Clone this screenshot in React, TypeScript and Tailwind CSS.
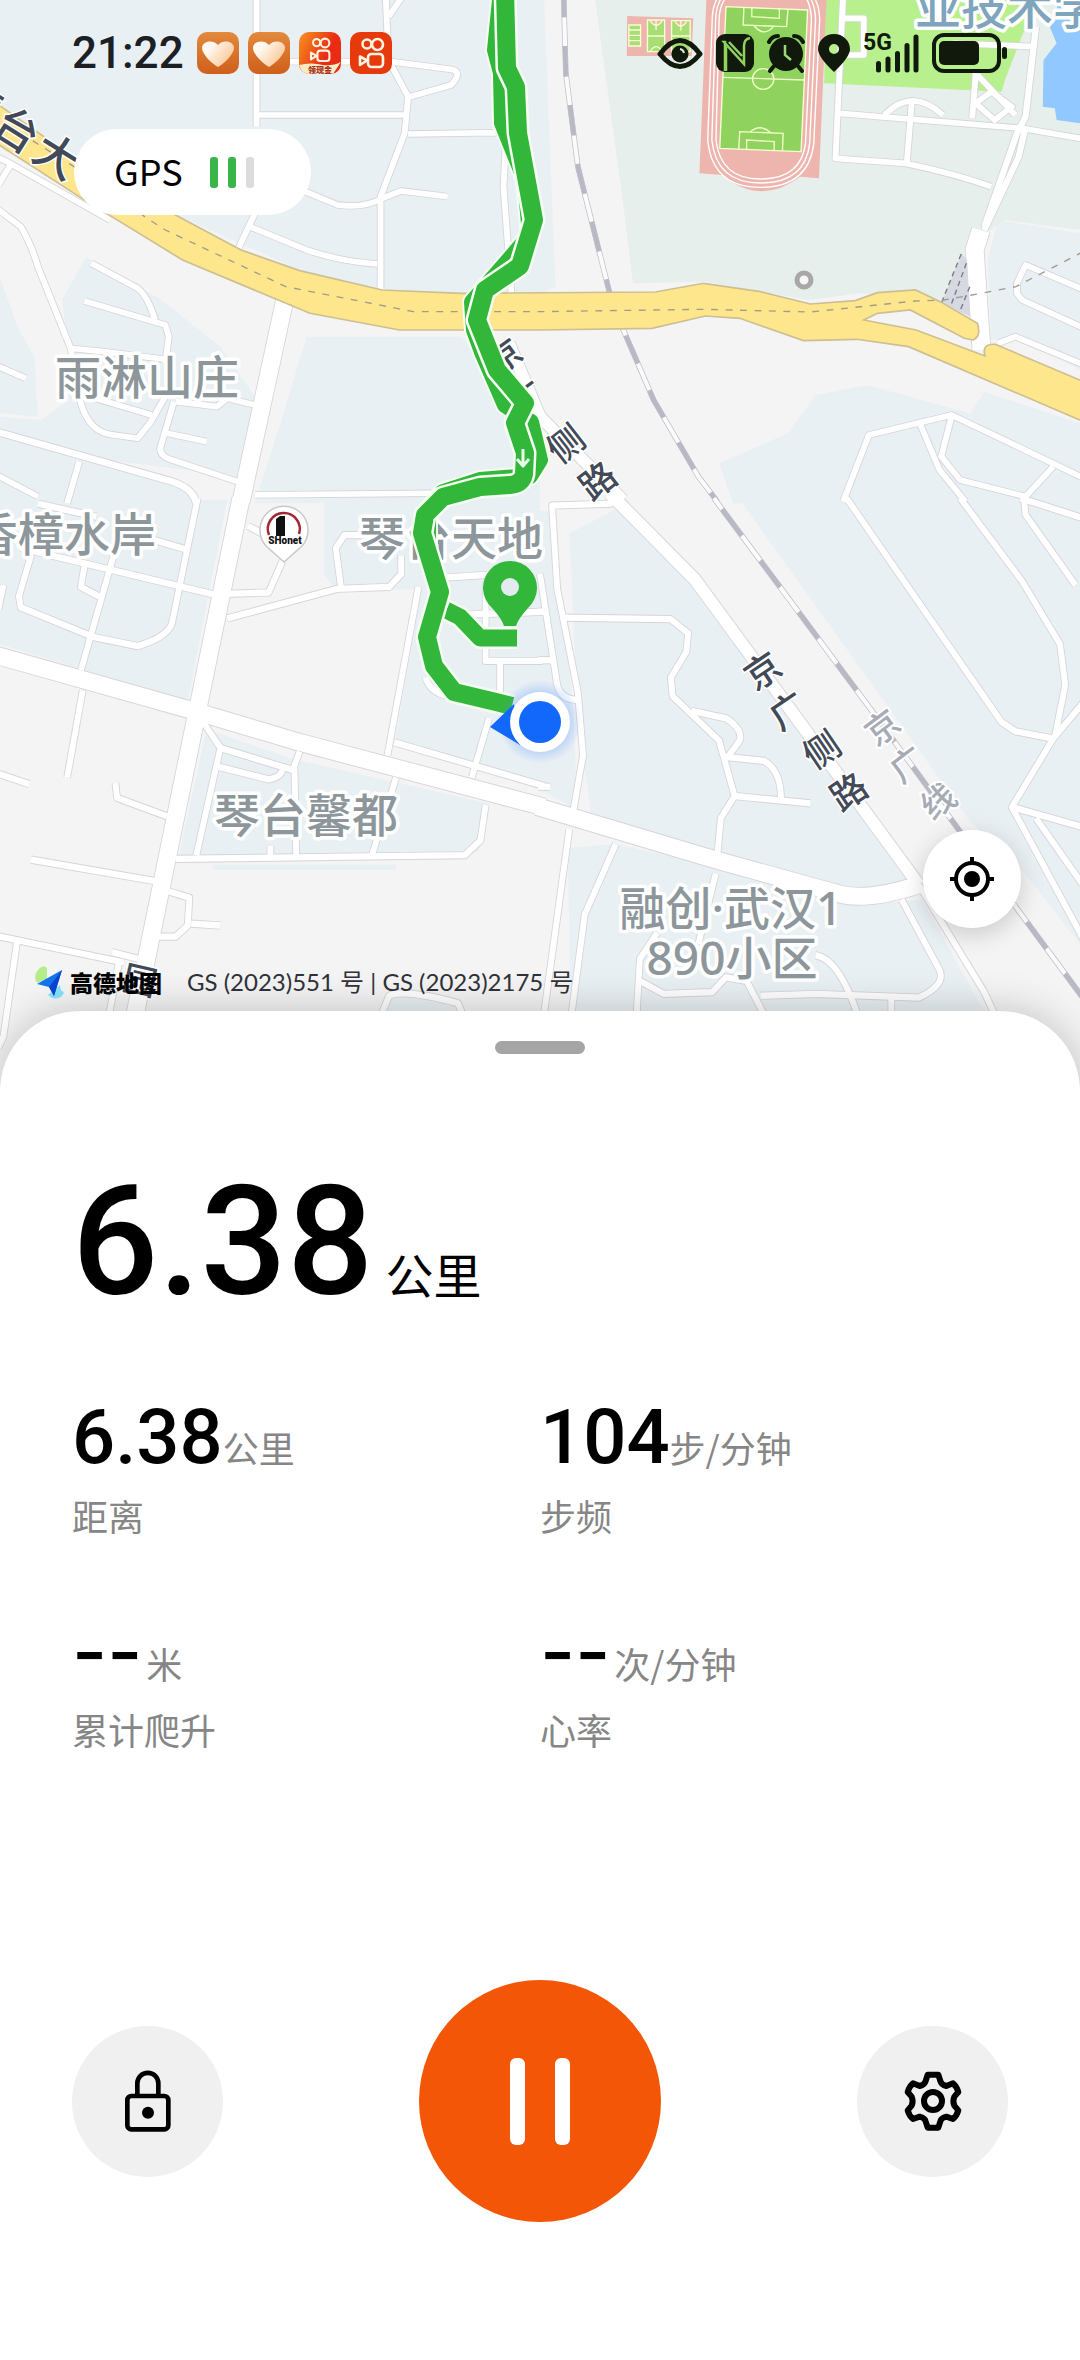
import React from "react";

type Road = { d: string; w?: number };
type Tile = { id: string; transform: string; blocks: string[]; roads: Road[] };

const tiles: Tile[] = [
  {
    id: "nw",
    transform: "scale(.3444 .3333)",
    blocks: [
      "M0,0H1580L1590,880H1340L1110,870L870,810L500,640L215,500L0,310Z",
      "M250,770L470,900L640,1040L740,1190L690,1430L230,1370L0,1290V1250L120,1260L200,1200V1050L180,900Z",
      "M0,830L50,980L100,1070L110,1250L0,1240Z",
      "M0,1310L560,1470L580,1510H0Z",
      "M890,1010H1340L1568,1260V1510H740L820,1250Z",
      "M380,640L560,700L690,760L780,800L500,690Z",
    ],
    roads: [
      { d: "M745,-10V380" },
      { d: "M748,345H1175" },
      { d: "M1120,-10L1128,180L1185,290L1175,400L1105,590V875" },
      { d: "M1168,-10L1128,50" },
      { d: "M830,185H1135L1310,208Q1345,215 1310,255L1190,290" },
      { d: "M1185,402L1440,398L1470,400L1462,560L1485,880" },
      { d: "M880,572L980,615Q1060,625 1110,595L1165,573L1300,590" },
      { d: "M745,630L690,750" },
      { d: "M730,682L890,750Q990,785 1095,792" },
      { d: "M-10,470L20,485L320,660" },
      { d: "M30,495L-5,555" },
      { d: "M-10,625L60,680Q90,730 110,800L205,1045L235,1210Q260,1300 330,1305L400,1315L435,1270L480,1190" },
      { d: "M205,1045L300,1055L480,1078" },
      { d: "M265,790L400,865Q430,890 450,960" },
      { d: "M245,903L480,975L490,1010L480,1090" },
      { d: "M260,1190L440,1245" },
      { d: "M510,1205L630,1220L660,1195L740,1215" },
      { d: "M505,1205L465,1345Q465,1370 500,1380L690,1445" },
      { d: "M485,1300L600,1325" },
      { d: "M-10,1097L75,1135" },
      { d: "M-10,1295L500,1445Q560,1465 570,1510", w: 20 },
      { d: "M230,1385L195,1510" },
      { d: "M-10,1425L110,1490" },
      { d: "M740,1485L1260,1480" },
      { d: "M827,900L700,1505", w: 50 },
    ],
  },
  {
    id: "ne",
    transform: "translate(540 0) scale(.3444 .3333)",
    blocks: [
      "M0,0H12L45,860L0,880Z",
      "M1330,660L1568,700V1110L1380,1010L1310,1020L1300,780Z",
      "M800,1185L950,1155L1250,1240L1290,1175L1568,1270V1510H560L520,1390L720,1300Z",
    ],
    roads: [
      { d: "M880,-10L858,475L1060,490Q1200,520 1310,560" },
      { d: "M870,340L1400,385L1580,417" },
      { d: "M880,55H940V165H880" },
      { d: "M1080,300L1065,490" },
      { d: "M1000,345Q1080,260 1170,345" },
      { d: "M1440,80L1410,350L1385,400L1290,680", w: 18 },
      { d: "M1408,390L1390,470L1290,690", w: 18 },
      { d: "M1200,130L1440,140" },
      { d: "M1265,220L1255,355" },
      { d: "M1270,225L1380,345" },
      { d: "M1265,310L1320,360L1370,320L1310,275Z" },
      { d: "M1280,690L1262,750L1282,1050", w: 52 },
      { d: "M1580,870L1410,795L1385,850V880L1400,900L1580,985" },
      { d: "M1330,1030L1380,1010L1580,1095" },
      { d: "M880,1505L955,1305L1195,1245L1580,1435" },
      { d: "M1195,1250L1165,1370L1220,1440L1410,1490L1490,1400" },
      { d: "M1105,1275L1160,1410L1235,1505" },
      { d: "M-90,1030L0,1250L240,1500", w: 34 },
    ],
  },
  {
    id: "sw",
    transform: "translate(0 500) scale(.3444 .37)",
    blocks: [
      "M0,0H660L545,545L0,390Z",
      "M940,0H1568V230L1230,240L980,250L940,200Z",
      "M1225,240L1568,200V780L1145,660Z",
      "M600,620L850,700L1420,820L1390,950L1350,960H520L545,850Z",
      "M1110,1390L1130,1340Q1170,1320 1330,1360L1345,1400Z",
      "M620,985H1150V1000H620Z",
    ],
    roads: [
      { d: "M110,10L280,45" },
      { d: "M574,-5L500,330Q490,370 400,395L270,370L60,290L55,260L90,150" },
      { d: "M60,130L620,255L780,250L820,165" },
      { d: "M330,150L235,460" },
      { d: "M245,180L235,235L290,262" },
      { d: "M400,95L545,135" },
      { d: "M240,515L195,750" },
      { d: "M-10,738L85,768" },
      { d: "M335,765L340,805L485,855" },
      { d: "M90,972L450,1030" },
      { d: "M480,1055L550,1075L545,1150L510,1180H450" },
      { d: "M555,1145L640,1150" },
      { d: "M-10,1178L360,1250" },
      { d: "M325,1222L400,1240" },
      { d: "M50,1190L10,1450L-5,1480" },
      { d: "M345,1250L315,1400" },
      { d: "M10,230L-5,295" },
      { d: "M720,70L770,95" },
      { d: "M660,320L980,240L1130,235L1165,200V150" },
      { d: "M990,235L975,130L1000,95H1050" },
      { d: "M1215,235L1125,690" },
      { d: "M1145,655L1580,773" },
      { d: "M1420,590L1370,750" },
      { d: "M1290,210L1450,200" },
      { d: "M1235,480Q1250,520 1300,530" },
      { d: "M1410,220V435H1575" },
      { d: "M1350,310L1575,302" },
      { d: "M1452,435V520" },
      { d: "M590,600L640,670L850,730L870,680" },
      { d: "M640,670L570,960" },
      { d: "M630,720L780,755Q815,750 820,730" },
      { d: "M855,725L860,960" },
      { d: "M1150,750L1080,960" },
      { d: "M510,970L1350,960L1395,920L1410,825" },
      { d: "M785,935V965" },
      { d: "M1105,1395L1130,1340Q1170,1320 1330,1360L1345,1395" },
      { d: "M700,-5L572,575L390,1400", w: 50 },
      { d: "M-10,420L570,572L870,655L1580,830", w: 46 },
    ],
  },
  {
    id: "se",
    transform: "translate(540 500) scale(.3444 .37)",
    blocks: [
      "M-5,30H30L95,540L110,840L-5,780Z",
      "M85,90L230,20L430,220L1080,1020L960,1060L860,1040L220,890L150,860L110,600Z",
      "M80,940L220,930L1000,1090L1110,1080L1300,1400H90Z",
      "M580,0H1568V1200L1400,1000L1250,870Z",
    ],
    roads: [
      { d: "M210,10L35,15L50,240L110,520L125,690L95,850" },
      { d: "M0,200L50,500Q60,540 110,540" },
      { d: "M-5,302H15" },
      { d: "M-5,433H35" },
      { d: "M60,318L380,322L430,360L425,410L380,480L385,530L520,650L565,800L525,860L515,960" },
      { d: "M440,570L540,590Q590,620 580,650L545,695L650,705Q700,730 700,810" },
      { d: "M565,800L785,820" },
      { d: "M85,890L10,1400" },
      { d: "M220,930L130,1120L90,1400" },
      { d: "M510,1010L460,1200" },
      { d: "M280,1400L290,1240L340,1170" },
      { d: "M290,1300L360,1335L500,1330L540,1290L600,1300L650,1390" },
      { d: "M640,1340L800,1335L1100,1345Q1180,1310 1160,1270L1050,1080" },
      { d: "M800,1230Q870,1240 925,1400" },
      { d: "M1020,1345V1400" },
      { d: "M890,-5L1340,600L1380,625L1490,645L1370,830L1580,885" },
      { d: "M1220,-5L1400,220L1510,390L1525,500L1495,640" },
      { d: "M1490,645L1580,545" },
      { d: "M1370,830L1580,1190" },
      { d: "M1440,860L1580,1045" },
      { d: "M1405,-5L1410,40L1555,230" },
      { d: "M1395,-5L1580,50" },
      { d: "M-5,775H30" },
      { d: "M1100,1040L1290,1330L1325,1400" },
      { d: "M200,-20L450,215L1100,1040", w: 34 },
      { d: "M-10,828L500,970L870,1065Q950,1085 1100,1040", w: 46 },
    ],
  },
];

const tileOf = (id: string) => tiles.find((t) => t.id === id)!.transform;

function Rail({ d, offset = 0 }: { d: string; offset?: number }) {
  return (
    <g fill="none">
      <path d={d} stroke="#bcbcc6" strokeWidth="16" />
      <path d={d} stroke="#fbfbfb" strokeWidth="12" />
      <path d={d} stroke="#b9b9c6" strokeWidth="14" strokeDasharray="92 86" strokeDashoffset={offset} />
    </g>
  );
}

function Glyph({ x, y, angle, size, children }: { x: number; y: number; angle: number; size: number; children: string }) {
  return (
    <text transform={`translate(${x} ${y}) rotate(${angle})`} textAnchor="middle" dy={Math.round(size * 0.37)} fontSize={size}>
      {children}
    </text>
  );
}

const route =
  "M505,-10L507,68L516,87L518,133L534,220L520,266L485,290L477,320L497,370L525,403L515,423L525,453L524,474Q522,484 510,485L480,487L443,497L425,515L422,533L440,592L427,637L434,666L454,692L496,702L512,706";
const olderRoute = "M501,-10L495,50L501,73L502,123L525,180L530,235L507,262L472,302L474,330L482,352L505,405L531,422L540,460L530,476L480,480L443,492L428,510V545";
const branch = "M446,610L460,617L480,638H517";

function MapDrawing() {
  return (
    <svg viewBox="0 0 1080 1100" className="block h-auto w-full font-['Noto_Sans','Noto_Sans_CJK_SC',sans-serif]" role="img" aria-label="运动轨迹地图">
      <defs>
        <radialGradient id="glow">
          <stop offset="0.6" stopColor="#4b8cff" stopOpacity="0.35" />
          <stop offset="1" stopColor="#4b8cff" stopOpacity="0" />
        </radialGradient>
      </defs>
      <rect width="1080" height="1100" fill="#f4f4f5" />
      {tiles.map((t) => (
        <g key={t.id} transform={t.transform} fill="#e9f0f4">
          {t.blocks.map((d) => (
            <path key={d} d={d} />
          ))}
        </g>
      ))}

      <g transform={tileOf("ne")}>
        <path d="M160,0H1568V690L1350,660L1240,740L1170,900L930,880L780,900L480,845L270,850L240,600Z" fill="#e7efed" />
        <path d="M830,0H1440L1350,240L1340,275L825,250Z" fill="#b8f08d" />
        <path d="M1510,0H1568V370L1500,360L1495,325L1460,320L1462,180L1500,130L1480,80Z" fill="#91c8ff" />
        <path d="M483,0H832L810,535L755,530Q640,620 530,525L463,520Z" fill="#edb5ad" />
        <g fill="none" stroke="#fff" strokeWidth="4">
          <path d="M517,-10Q500,20 500,60L487,420Q500,562 640,562Q780,562 795,430L812,60Q812,20 795,-10" />
          <path d="M529,-10Q510,20 510,60L499,420Q512,549 640,549Q770,549 783,430L800,60Q800,20 783,-10" />
          <path d="M541,-10Q520,20 520,60L511,420Q524,537 640,537Q758,537 771,430L788,60Q788,20 771,-10" />
        </g>
        <path d="M540,20L777,30L758,455L522,445Z" fill="#8fd25e" stroke="#f4ffd0" strokeWidth="4" />
        <g fill="none" stroke="#f1ffc8" strokeWidth="4">
          <path d="M530,232L768,240M592,22L590,75L716,80L720,28M615,23V50L695,55V27M622,78Q650,112 678,80" />
          <circle cx="648" cy="237" r="31" />
          <path d="M577,447L580,395L706,400L704,453M600,448V420L680,425V452M610,396Q640,370 670,398" />
        </g>
        <path d="M253,48L445,55L440,168H252Z" fill="#edb5ad" />
        <g fill="#a9dd76" stroke="#f4ffd0" strokeWidth="4">
          <path d="M258,75H292V138H258ZM258,90H292M258,106H292M258,122H292" />
          <path d="M312,60H362V155H312ZM312,108H362M320,62Q337,90 355,62M337,62V90M320,155Q337,125 355,155" />
          <path d="M382,62H436V155H382ZM382,108H436M392,64Q409,92 426,64M409,64V92M392,155Q409,125 426,155" />
        </g>
      </g>

      <g fill="none" stroke="#d5d5da" strokeLinejoin="round">
        {tiles.map((t) => (
          <g key={t.id} transform={t.transform}>
            {t.roads.map((r) => (
              <path key={r.d} d={r.d} strokeWidth={(r.w ?? 17) + 5} />
            ))}
          </g>
        ))}
      </g>
      <g fill="none" stroke="#fff" strokeLinejoin="round">
        {tiles.map((t) => (
          <g key={t.id} transform={t.transform}>
            {t.roads.map((r) => (
              <path key={r.d} d={r.d} strokeWidth={r.w ?? 17} />
            ))}
          </g>
        ))}
      </g>

      <g transform={tileOf("ne")}>
        <Rail d="M68,-40L75,220L110,500L200,870L240,985L330,1200L460,1430L515,1505" />
        <path d="M1225,760L1240,780L1250,950L1165,910Z" fill="#d6d8e2" />
        <path d="M1223,762L1165,910M1238,790L1190,925M1248,860L1215,945" stroke="#777a88" strokeWidth="4" strokeDasharray="16 12" />
      </g>
      <g transform={tileOf("se")}>
        <Rail d="M505,-5L960,565L1215,890L1580,1350" offset={140} />
      </g>
      <g transform={tileOf("nw")}>
        <path
          d="M-10,310L210,470L500,640L700,750L870,812L1110,870L1340,880L1903,876L2043,850L2208,875L2353,912L2483,902L2548,878L2658,870L2730,905L2838,970Q2850,1010 2825,1020L2800,1015L2643,930L2548,940L2508,960L2660,990L2860,1068Q2850,1030 2890,1033L3146,1145V1265L2638,1040L2488,1018L2333,1022L2148,955L2048,948L1893,985L1568,990H1160L900,940L530,780L230,590L-10,430Z"
          fill="#fee68d"
          stroke="#cdbf92"
          strokeWidth="5"
        />
        <path
          d="M60,400L215,500L420,650L480,690L830,860L1200,935L1568,935L2043,928L2353,936L2658,903L2740,900L2850,880L2950,860L3140,758"
          fill="none"
          stroke="#a19c8c"
          strokeWidth="4"
          strokeDasharray="20 22"
        />
      </g>
      <circle cx="804" cy="280" r="7" fill="#f6f6f6" stroke="#a8a8a8" strokeWidth="5" />

      <g fill="#434a57" stroke="#fff" strokeWidth="3" paintOrder="stroke" fontWeight="500">
        <Glyph x={-22} y={104} angle={32} size={44}>琴</Glyph>
        <Glyph x={17} y={130} angle={32} size={44}>台</Glyph>
        <Glyph x={57} y={156} angle={32} size={44}>大</Glyph>
        <Glyph x={504} y={356} angle={-36} size={34}>京</Glyph>
        <Glyph x={526} y={398} angle={-36} size={34}>广</Glyph>
        <Glyph x={566} y={444} angle={-38} size={36}>侧</Glyph>
        <Glyph x={598} y={481} angle={-38} size={36}>路</Glyph>
        <Glyph x={763} y={671} angle={-34} size={36}>京</Glyph>
        <Glyph x={788} y={711} angle={-34} size={36}>广</Glyph>
        <Glyph x={822} y={750} angle={-34} size={36}>侧</Glyph>
        <Glyph x={849} y={792} angle={-34} size={36}>路</Glyph>
        <Glyph x={140} y={980} angle={13} size={34}>园</Glyph>
      </g>
      <g fill="#a7abb6" stroke="#fff" strokeWidth="4" paintOrder="stroke" fontWeight="500">
        <Glyph x={882} y={727} angle={-37} size={34}>京</Glyph>
        <Glyph x={907} y={764} angle={-37} size={34}>广</Glyph>
        <Glyph x={938} y={801} angle={-37} size={34}>线</Glyph>
      </g>
      <g fill="#8d979b" stroke="#fff" strokeWidth="7" strokeLinejoin="round" paintOrder="stroke" fontSize="46" fontWeight="500" textAnchor="middle">
        <text x="147" y="394">雨淋山庄</text>
        <text x="64" y="551">香樟水岸</text>
        <text x="451" y="555">琴台天地</text>
        <text x="306" y="832">琴台馨都</text>
        <text x="731" y="925">融创·武汉1</text>
        <text x="732" y="975">890小区</text>
        <text x="1007" y="24" fill="#7fa5bd">业技术学</text>
      </g>

      <path d="M284,562L266,546A24,24 0 1 1 302,546Z" fill="#fff" stroke="#c9c9cd" strokeWidth="1.5" />
      <path d="M269,535A16,16 0 1 1 299,534" fill="none" stroke="#a32732" strokeWidth="2.5" />
      <path d="M276,536V519L280,516H285V536Z" fill="#111" />
      <text x="285" y="544" fontSize="10" fontWeight="900" textAnchor="middle" fill="#111" className="font-['Roboto',sans-serif]">
        SHonet
      </text>

      <g fill="none" strokeLinejoin="round">
        <path d={olderRoute} stroke="#f4fff2" strokeWidth="20" />
        <path d={olderRoute} stroke="#33b73a" strokeWidth="16" />
        <path d={branch} stroke="#f4fff2" strokeWidth="22" />
        <path d={branch} stroke="#33b73a" strokeWidth="17" />
        <path d={route} stroke="#f4fff2" strokeWidth="23" />
        <path d={route} stroke="#33b73a" strokeWidth="18" />
        <path d="M523,449V465M517,459L523,466L529,459" stroke="#eaffea" strokeWidth="3" />
      </g>
      <path d="M504,626Q502,619 492,608A27,27 0 1 1 528,608Q518,619 516,626Z" fill="#33b73a" />
      <circle cx="510" cy="587" r="9" fill="#e3ebee" />
      <circle cx="540" cy="722" r="42" fill="url(#glow)" />
      <path d="M490,727L514,704L520,745Z" fill="#1268fb" />
      <circle cx="540" cy="722" r="30" fill="#fff" />
      <circle cx="540" cy="722" r="21" fill="#1268fb" />
    </svg>
  );
}

function HeartApp() {
  return (
    <svg viewBox="0 0 42 42" className="size-[42px]" aria-hidden="true">
      <defs>
        <linearGradient id="heartBg" x1="0" y1="0" x2="0" y2="1">
          <stop offset="0" stopColor="#e38a3c" />
          <stop offset="1" stopColor="#cf5f1c" />
        </linearGradient>
        <linearGradient id="heartFg" x1="0" y1="0" x2="1" y2="0.6">
          <stop offset="0.3" stopColor="#fff8f0" />
          <stop offset="1" stopColor="#fbc795" />
        </linearGradient>
      </defs>
      <rect width="42" height="42" rx="10" fill="url(#heartBg)" />
      <path d="M21 35C15 32 5 22 5 16C5 9 16 7 21 13C26 7 37 9 37 16C37 22 27 32 21 35Z" fill="url(#heartFg)" />
    </svg>
  );
}

function Camera() {
  return (
    <g fill="none" stroke="#fff3e4" strokeWidth="2.6" strokeLinejoin="round">
      <circle cx="17" cy="12" r="4.5" />
      <circle cx="27.500" cy="12.500" r="5.500" />
      <rect x="18" y="22" width="15" height="13" rx="3.500" />
      <path d="M10 24.500L17 28.500L10 33Z" />
    </g>
  );
}

function KwaiLiteApp() {
  return (
    <svg viewBox="0 0 42 42" className="size-[42px]" aria-hidden="true">
      <defs>
        <linearGradient id="kwaiBg" x1="0" y1="0" x2="1" y2="0.5">
          <stop offset="0" stopColor="#f7941f" />
          <stop offset="0.75" stopColor="#ea2c14" />
        </linearGradient>
        <clipPath id="kwaiClip">
          <rect width="42" height="42" rx="10" />
        </clipPath>
      </defs>
      <g clipPath="url(#kwaiClip)">
        <rect width="42" height="42" fill="url(#kwaiBg)" />
        <g transform="translate(4 1) scale(.8)">
          <Camera />
        </g>
        <path d="M0 33Q12 30 24 33Q34 34 42 30L34 42H4Z" fill="#fdebc4" />
        <text x="21" y="41" fontSize="8" fontWeight="900" textAnchor="middle" fill="#a8321c" className="font-['Noto_Sans_CJK_SC',sans-serif]">
          领现金
        </text>
      </g>
    </svg>
  );
}

function KwaiApp() {
  return (
    <svg viewBox="0 0 42 42" className="size-[42px]" aria-hidden="true">
      <rect width="42" height="42" rx="10" fill="#e63a0c" />
      <Camera />
    </svg>
  );
}

function StatusBar() {
  return (
    <header className="flex items-center justify-between px-[72px] pt-[31px] text-[#1c2024]">
      <div className="flex items-center gap-[9px]">
        <time className="mr-1 font-['Roboto',sans-serif] text-[44px] leading-[44px] font-medium">21:22</time>
        <HeartApp />
        <HeartApp />
        <KwaiLiteApp />
        <KwaiApp />
      </div>
      <div className="flex items-center gap-[13px] text-[#10190c]">
        <svg viewBox="0 0 46 40" className="h-10 w-[46px]" aria-hidden="true">
          <path d="M3 21Q23 -6 43 21Q23 46 3 21Z" fill="none" stroke="currentColor" strokeWidth="5" strokeLinejoin="round" />
          <circle cx="23" cy="21" r="8.500" fill="currentColor" />
          <path d="M23 16A5 5 0 0 1 27 20" fill="none" stroke="#d9e3dd" strokeWidth="2" />
        </svg>
        <svg viewBox="0 0 38 40" className="h-10 w-[38px]" aria-hidden="true">
          <rect y="1" width="38" height="38" rx="9" fill="currentColor" />
          <path d="M9 38V9Q8 9 8 9L28 31V13Q28 6 34 5M13 9L26 23M10 14V38" fill="none" stroke="#8fd25e" strokeWidth="2.500" />
        </svg>
        <svg viewBox="0 0 38 40" className="h-10 w-[38px]" aria-hidden="true">
          <circle cx="19" cy="21" r="17" fill="currentColor" />
          <path d="M2 9Q5 3 11 3M36 9Q33 3 27 3M7 33L3 38M31 33L35 38" stroke="currentColor" strokeWidth="4" fill="none" strokeLinecap="round" />
          <path d="M18 12V22L24 27" fill="none" stroke="#9bd873" strokeWidth="2.500" />
        </svg>
        <svg viewBox="0 0 32 40" className="h-10 w-8" aria-hidden="true">
          <path fillRule="evenodd" d="M16 39Q0 24 0 16A16 15 0 0 1 32 16Q32 24 16 39ZM16 11A5 5 0 1 0 16 21A5 5 0 1 0 16 11Z" fill="currentColor" />
        </svg>
        <div className="relative">
          <span className="absolute -top-px left-0 font-['Roboto',sans-serif] text-[23px] leading-[22px] font-bold">5G</span>
          <svg viewBox="0 0 56 40" className="h-10 w-14" aria-hidden="true">
            <path d="M15.500 30.500V37M25 26V37M34.500 20.500V37M44 12.500V37M53 4V37" stroke="currentColor" strokeWidth="5" strokeLinecap="round" />
          </svg>
        </div>
        <svg viewBox="0 0 76 40" className="h-10 w-[76px]" aria-hidden="true">
          <rect x="2" y="2" width="65" height="36" rx="10" fill="none" stroke="currentColor" strokeWidth="4" />
          <rect x="7" y="8" width="40" height="24" rx="5" fill="currentColor" />
          <rect x="70" y="14" width="5" height="12" rx="2.500" fill="currentColor" />
        </svg>
      </div>
    </header>
  );
}

function GpsPill() {
  return (
    <div className="mt-[54px] ml-[74px] flex h-[86px] w-[237px] items-center rounded-full bg-white pl-10">
      <span className="pb-1 font-['Noto_Sans_CJK_SC',sans-serif] text-[36px] leading-[44px] text-black">GPS</span>
      <span className="ml-[27px] flex gap-[10px]" role="img" aria-label="信号中等">
        <i className="h-[31px] w-2 rounded-[3px] bg-[#39b54a]" />
        <i className="h-[31px] w-2 rounded-[3px] bg-[#39b54a]" />
        <i className="h-[31px] w-2 rounded-[3px] bg-[#dcdcdc]" />
      </span>
    </div>
  );
}

function Attribution() {
  return (
    <div className="flex h-[34px] items-center pl-[34px] text-[#2f3238]">
      <svg viewBox="0 0 32 34" className="h-[34px] w-8" aria-hidden="true">
        <path d="M2 8Q8 -2 13 3V14L3 18Q0 14 2 8Z" fill="#b5ec8c" />
        <path d="M14 30L26 20Q26 26 30 27Q28 35 18 33Z" fill="#86e2fb" />
        <path d="M3 19L28 5L20 31L15 22Z" fill="#1473ee" />
        <path d="M28 5L15 22L20 31Z" fill="#0a45cf" />
      </svg>
      <strong className="ml-1 font-['Noto_Sans_CJK_SC',sans-serif] text-[23px] leading-[34px] font-black text-black">高德地图</strong>
      <span className="ml-[25px] font-['Lato','Noto_Sans_CJK_SC',sans-serif] text-[24px] leading-[34px]">GS (2023)551 号 | GS (2023)2175 号</span>
    </div>
  );
}

type Stat = { value: string; unit: string; label: string };

const stats: Stat[] = [
  { value: "6.38", unit: "公里", label: "距离" },
  { value: "104", unit: "步/分钟", label: "步频" },
  { value: "--", unit: "米", label: "累计爬升" },
  { value: "--", unit: "次/分钟", label: "心率" },
];

function StatItem({ value, unit, label }: Stat) {
  const face = value === "--" ? "mr-1 font-['Inter',sans-serif]" : "font-['Roboto',sans-serif]";
  return (
    <div className="flex flex-col-reverse">
      <dt className="mt-[18px] text-[36px] leading-[44px] text-[#868686]">{label}</dt>
      <dd className="flex items-baseline">
        <span className={`${face} text-[76px] leading-[76px] font-medium text-black`}>{value}</span>
        <span className="text-[36px] leading-[44px] text-[#868686]">{unit}</span>
      </dd>
    </div>
  );
}

function Controls() {
  return (
    <div className="mt-[229px] flex items-center justify-between px-[72px]">
      <button type="button" aria-label="锁定" className="flex size-[151px] items-center justify-center rounded-full bg-[#f0f0f0]">
        <svg viewBox="219 215 144 190" className="h-[64px] w-12" fill="none" stroke="#000" strokeWidth="14" aria-hidden="true">
          <rect x="229" y="295" width="123" height="100" rx="12" />
          <path d="M259 295V257A31.500 31.500 0 0 1 322 257V295" />
          <circle cx="291" cy="345" r="18" fill="#000" stroke="none" />
        </svg>
      </button>
      <button type="button" aria-label="暂停" className="flex size-[242px] items-center justify-center gap-[30px] rounded-full bg-[#f25606]">
        <i className="h-[87px] w-[15px] rounded-[6px] bg-white" />
        <i className="h-[87px] w-[15px] rounded-[6px] bg-white" />
      </button>
      <button type="button" aria-label="设置" className="flex size-[151px] items-center justify-center rounded-full bg-[#f0f0f0]">
        <svg viewBox="188 220 180 180" className="size-[60px]" fill="none" stroke="#000" strokeWidth="18" strokeLinejoin="round" aria-hidden="true">
          <path d="M262 231H294L300 250Q303 262 318 265L338 257Q349 266 354 283L342 297Q336 310 342 324L354 338Q349 355 338 364L318 357Q303 360 300 371L294 390H262L256 371Q253 360 238 357L218 364Q207 355 202 338L214 324Q220 310 214 297L202 283Q207 266 218 257L238 265Q253 262 256 250Z" />
          <circle cx="278" cy="310" r="27" />
        </svg>
      </button>
    </div>
  );
}

export default function App() {
  return (
    <main className="flex min-h-screen flex-col overflow-hidden bg-white font-['Noto_Sans_CJK_SC',sans-serif]">
      <section className="relative">
        <MapDrawing />
        <div className="absolute inset-0 flex flex-col">
          <StatusBar />
          <GpsPill />
          <div className="mt-auto mr-[59px] mb-[37px] flex justify-end">
            <button
              type="button"
              aria-label="定位"
              className="flex size-[98px] items-center justify-center rounded-full bg-white shadow-[0_6px_24px_rgba(0,0,0,0.18)]"
            >
              <svg viewBox="0 0 46 46" className="size-[46px]" fill="none" stroke="#000" strokeWidth="4" aria-hidden="true">
                <circle cx="23" cy="23" r="16" />
                <path d="M23 1V8M23 38V45M1 23H8M38 23H45" />
                <circle cx="23" cy="23" r="8" fill="#000" stroke="none" />
              </svg>
            </button>
          </div>
          <div className="mb-[101px]">
            <Attribution />
          </div>
        </div>
      </section>

      <section className="relative -mt-[89px] flex-1 rounded-t-[80px] bg-white pt-[30px] pb-20 shadow-[0_0_40px_rgba(0,0,0,0.22)]">
        <div className="mx-auto h-[13px] w-[90px] rounded-full bg-[#a5a5a5]" />
        <h1 className="mt-28 flex items-baseline gap-3 px-[72px] text-black">
          <span className="font-['Roboto',sans-serif] text-[152px] leading-[152px] font-medium">6.38</span>
          <span className="text-[48px] leading-[60px] font-normal">公里</span>
        </h1>
        <dl className="mt-[81px] grid grid-cols-2 gap-y-[76px] px-[72px]">
          {stats.map((s) => (
            <StatItem key={s.label} {...s} />
          ))}
        </dl>
        <Controls />
      </section>
    </main>
  );
}
